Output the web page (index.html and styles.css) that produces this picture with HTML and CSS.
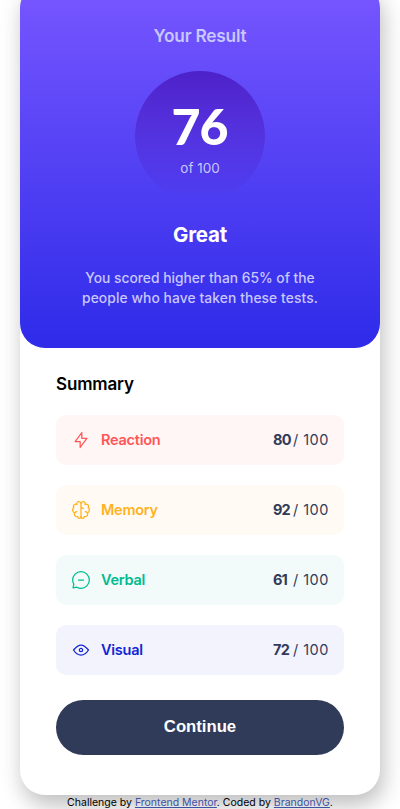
FILE: index.html
```html
<!DOCTYPE html>
<html lang="en">
<head>
<meta charset="utf-8">
<title>Results summary</title>
<link rel="stylesheet" href="styles.css">
</head>
<body>
<main class="card">
  <section class="result">
    <h1 class="result-title">Your Result</h1>
    <div class="score"><strong class="score-value">76</strong><span class="score-total">of 100</span></div>
    <h2 class="grade">Great</h2>
    <p class="message">You scored higher than 65% of the<br><span class="message-end">people who have taken these tests.</span></p>
  </section>
  <section class="summary">
    <h2 class="summary-title">Summary</h2>
    <ul class="list">
      <li class="row reaction">
        <svg class="icon" viewBox="0 0 20 20"><path d="M10.833 8.333V2.5l-6.666 9.167h5V17.5l6.666-9.167h-5Z"/></svg>
        <span class="name">Reaction</span><span class="points"><b>80</b><span class="max">/ 100</span></span>
      </li>
      <li class="row memory">
        <svg class="icon" viewBox="0 0 20 20"><path d="M5.833 11.667a2.5 2.5 0 1 0 .834 4.858"/><path d="M3.553 13.004a3.333 3.333 0 0 1-.728-5.53m.025-.067a2.083 2.083 0 0 1 2.983-2.824m.199.054A2.083 2.083 0 1 1 10 3.75v12.917a1.667 1.667 0 0 1-3.333 0M10 5.833a2.5 2.5 0 0 0 2.5 2.5m1.667 3.334a2.5 2.5 0 1 1-.834 4.858"/><path d="M16.447 13.004a3.334 3.334 0 0 0 .728-5.53m-.025-.067a2.083 2.083 0 0 0-2.983-2.824M10 3.75a2.085 2.085 0 0 1 2.538-2.033 2.084 2.084 0 0 1 1.43 2.92m-.635 12.03a1.667 1.667 0 0 1-3.333 0"/></svg>
        <span class="name">Memory</span><span class="points"><b>92</b><span class="max">/ 100</span></span>
      </li>
      <li class="row verbal">
        <svg class="icon" viewBox="0 0 20 20"><path d="M7.5 10h5M10 18.333A8.333 8.333 0 1 0 1.667 10c0 1.518.406 2.942 1.115 4.167l-.699 3.75 3.75-.699A8.295 8.295 0 0 0 10 18.333Z"/></svg>
        <span class="name">Verbal</span><span class="points"><b>61</b><span class="max">/ 100</span></span>
      </li>
      <li class="row visual">
        <svg class="icon" viewBox="0 0 20 20"><path d="M10 11.667a1.667 1.667 0 1 0 0-3.334 1.667 1.667 0 0 0 0 3.334Z"/><path d="M17.5 10c-1.574 2.492-4.402 5-7.5 5s-5.926-2.508-7.5-5C4.416 7.632 6.66 5 10 5s5.584 2.632 7.5 5Z"/></svg>
        <span class="name">Visual</span><span class="points"><b>72</b><span class="max">/ 100</span></span>
      </li>
    </ul>
    <button class="continue" type="button">Continue</button>
  </section>
</main>
<footer class="attribution">Challenge by <a href="#">Frontend Mentor</a>. Coded by <a href="#">BrandonVG</a>.</footer>
</body>
</html>
```

FILE: styles.css
```css
* { box-sizing: border-box; }
html { height: 100%; overflow: hidden; }
body {
  margin: 0;
  height: 809px;
  overflow: hidden;
  display: flex;
  flex-direction: column;
  align-items: center;
  font-family: Inter, "Liberation Sans", sans-serif;
  background: #fff;
}
h1, h2, p, ul { margin: 0; padding: 0; }
.card {
  flex: none;
  width: 360px;
  height: 812px;
  margin-top: -17px;
  border-radius: 25px;
  background: #fff;
  box-shadow: 3px 10px 22px rgba(0, 0, 0, .26);
}
.result {
  height: 365px;
  padding-top: 41px;
  display: flex;
  flex-direction: column;
  align-items: center;
  border-radius: 25px;
  background: linear-gradient(#7857ff, #2e2be9);
  color: #fff;
  text-align: center;
}
.result-title { font-size: 17.3px; line-height: 24px; font-weight: 600; color: #c8c7ff; letter-spacing: -.2px; }
.score {
  width: 130px;
  height: 130px;
  margin-top: 23px;
  padding-top: 30px;
  display: flex;
  flex-direction: column;
  align-items: center;
  border-radius: 50%;
  background: linear-gradient(#4d21c9, rgba(37, 33, 201, 0));
}
.score-value { font-family: Lato, sans-serif; font-size: 50px; line-height: 50px; font-weight: 900; letter-spacing: -1px; padding-right: 1px; }
.score-total { margin-top: 8px; font-size: 13.5px; line-height: 18px; color: #c8c7ff; }
.grade { margin-top: 20px; font-size: 20.5px; line-height: 28px; font-weight: 700; letter-spacing: -.2px; }
.message { margin-top: 19px; font-size: 13.8px; line-height: 20px; font-weight: 500; color: #c8c7ff; white-space: nowrap; }
.message-end { letter-spacing: .1px; }
.summary { padding: 24px 36px 0; }
.summary-title { font-size: 17px; line-height: 24px; font-weight: 600; letter-spacing: -.15px; color: #000; }
.list { margin-top: 19px; display: grid; gap: 20px; list-style: none; }
.row { height: 50px; padding: 0 15px; display: flex; align-items: center; border-radius: 10px; font-size: 14.5px; line-height: 18px; }
.icon { width: 20px; height: 20px; fill: none; stroke: currentColor; stroke-width: 1.25; stroke-linecap: round; stroke-linejoin: round; }
.name { margin-left: 10px; font-weight: 600; letter-spacing: -.25px; }
.points { margin-left: auto; display: flex; gap: 3px; color: #303b5a; }
.points b { width: 17px; font-weight: 700; letter-spacing: -.8px; }
.max { width: 36px; letter-spacing: .45px; white-space: nowrap; }
.reaction { color: #f55; background: #fff6f5; }
.memory { color: #ffb21e; background: #fffbf4; }
.verbal { color: #00bb8f; background: #f2fbfa; }
.visual { color: #1125d4; background: #f3f3fd; }
.continue {
  display: block;
  width: 288px;
  height: 55px;
  margin-top: 25px;
  padding: 0 0 2px;
  border: 0;
  border-radius: 28px;
  background: #303b5a;
  color: #fff;
  font: 700 16.7px/24px "Liberation Sans", Arial, sans-serif;
}
.attribution { margin-top: 1px; font-size: 10.5px; line-height: 14px; text-align: center; color: #000; white-space: nowrap; }
.attribution a { color: #3e52a3; }
```
